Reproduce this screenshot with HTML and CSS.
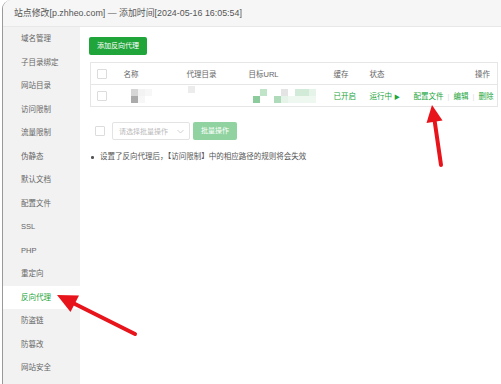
FILE: index.html
```
<!DOCTYPE html>
<html lang="zh-CN">
<head>
    <meta charset="UTF-8">
    <meta name="viewport" content="width=device-width, initial-scale=1.0">
    <title>站点修改 - 反向代理</title>
    <link rel="stylesheet" href="styles.css">
</head>
<body>

    <div class="window">

        <!-- 标题栏 -->
        <div class="titlebar">站点修改[p.zhheo.com] — 添加时间[2024-05-16 16:05:54]</div>

        <div class="main">

            <!-- 左侧菜单 -->
            <ul class="menu">
                <li>域名管理</li>
                <li>子目录绑定</li>
                <li>网站目录</li>
                <li>访问限制</li>
                <li>流量限制</li>
                <li>伪静态</li>
                <li>默认文档</li>
                <li>配置文件</li>
                <li>SSL</li>
                <li>PHP</li>
                <li>重定向</li>
                <li class="active">反向代理</li>
                <li>防盗链</li>
                <li>防篡改</li>
                <li>网站安全</li>
            </ul>

            <!-- 内容区 -->
            <div class="content">
                <button class="btn">添加反向代理</button>

                <table class="grid">
                    <colgroup>
                        <col class="c-check">
                        <col class="c-name">
                        <col class="c-path">
                        <col class="c-url">
                        <col class="c-cache">
                        <col class="c-state">
                        <col class="c-ops">
                    </colgroup>
                    <thead>
                        <tr>
                            <th><span class="checkbox"></span></th>
                            <th>名称</th>
                            <th>代理目录</th>
                            <th>目标URL</th>
                            <th>缓存</th>
                            <th>状态</th>
                            <th class="right">操作</th>
                        </tr>
                    </thead>
                    <tbody>
                        <tr>
                            <td><span class="checkbox"></span></td>
                            <td>
                                <span class="mosaic name-mosaic">
                                    <i class="g1"></i><i class="g5"></i><i class="g6"></i>
                                    <i class="g2"></i><i class="g6"></i><i></i>
                                </span>
                            </td>
                            <td>
                                <span class="mosaic path-mosaic">
                                    <i class="g4"></i>
                                    <i></i>
                                </span>
                            </td>
                            <td>
                                <span class="mosaic url-mosaic">
                                    <i></i><i class="n2"></i><i></i><i></i><i class="g3"></i><i></i><i class="n3"></i><i class="n3"></i><i class="n4"></i><i></i>
                                    <i class="n1"></i><i></i><i></i><i class="n5"></i><i class="n4"></i><i class="n6"></i><i class="n6"></i><i class="n6"></i><i class="n6"></i><i></i>
                                </span>
                            </td>
                            <td class="green">已开启</td>
                            <td class="green">运行中 <span class="play">▶</span></td>
                            <td class="right ops">
                                <a>配置文件</a><span class="sep">|</span><a>编辑</a><span class="sep">|</span><a>删除</a>
                            </td>
                        </tr>
                    </tbody>
                </table>

                <div class="batch">
                    <span class="checkbox"></span>
                    <div class="select">
                        <span>请选择批量操作</span>
                        <svg width="7" height="5" viewBox="0 0 7 5"><path d="M0.5 1 L3.5 4 L6.5 1" fill="none" stroke="#c8c8c8" stroke-width="0.8"/></svg>
                    </div>
                    <button class="btn btn-light">批量操作</button>
                </div>

                <ul class="tips">
                    <li>设置了反向代理后，【访问限制】中的相应路径的规则将会失效</li>
                </ul>
            </div>
        </div>
    </div>

    <!-- 标注箭头 -->
    <svg class="arrows" width="501" height="384" viewBox="0 0 501 384">
        <line x1="441" y1="165" x2="434.5" y2="120" stroke="#e8141b" stroke-width="4" stroke-linecap="round"/>
        <polygon points="432,105 426.5,123 442.5,120.5" fill="#e8141b"/>
        <line x1="135" y1="334" x2="73" y2="303" stroke="#e8141b" stroke-width="4" stroke-linecap="round"/>
        <polygon points="57,295 70.5,312 79,295.5" fill="#e8141b"/>
    </svg>

</body>
</html>
```

FILE: styles.css
```
/* 基础设置 */
body {
    margin: 0;
    font-family: "Liberation Sans", "Noto Sans CJK SC", sans-serif;
    color: #666;
    background: #fff;
    overflow: hidden;
    position: relative;
}

ul {
    list-style: none;
    margin: 0;
    padding: 0;
}

/* 窗口外框 */
.window {
    margin-left: 2px;
    height: 384px;
    border-left: 1px solid #9a9a9a;
    border-top-left-radius: 9px;
    overflow: hidden;
}

/* 标题栏 */
.titlebar {
    height: 26px;
    line-height: 26px;
    padding-left: 11px;
    background: #f6f6f6;
    border-bottom: 1px solid #e8e8e8;
    font-size: 8.9px;
    color: #555;
    white-space: nowrap;
}

.main {
    display: flex;
}

/* 左侧菜单 */
.menu {
    width: 77px;
    flex-shrink: 0;
    background: #f2f2f2;
    height: 360px;
}

.menu li {
    height: 23.5px;
    line-height: 23.5px;
    padding-left: 18px;
    font-size: 7.5px;
    color: #666;
}

.menu li.active {
    background: #fff;
    color: #20a53a;
}

/* 内容区 */
.content {
    flex: 1;
    padding: 10px 3px 0 9px;
}

.btn {
    display: block;
    height: 18px;
    padding: 0 8px;
    border: none;
    border-radius: 2px;
    background: #20a53a;
    color: #fff;
    font-family: inherit;
    font-size: 7px;
    line-height: 18px;
}

.btn-light {
    background: #90d3a0;
    width: 44px;
    padding: 0;
}

/* 表格 */
.grid {
    margin-top: 7px;
    margin-left: 1px;
    width: 408px;
    border-collapse: collapse;
    table-layout: fixed;
    border: 1px solid #e6e6e6;
    font-size: 7.5px;
}

.c-check { width: 33px; }
.c-name { width: 63px; }
.c-path { width: 62px; }
.c-url { width: 85px; }
.c-cache { width: 36px; }
.c-state { width: 44px; }

.grid th,
.grid td {
    padding: 0;
    text-align: left;
    font-weight: normal;
    white-space: nowrap;
}

.grid th {
    height: 21px;
    color: #666;
    border-bottom: 1px solid #e6e6e6;
}

.grid td {
    height: 21px;
}

.grid .right {
    text-align: right;
    padding-right: 7px;
}

.checkbox {
    display: inline-block;
    width: 8px;
    height: 8px;
    border: 1px solid #dcdcdc;
    border-radius: 1px;
    background: #fff;
    vertical-align: middle;
    margin-left: 6px;
}

.green {
    color: #20a53a;
}

.play {
    font-size: 6px;
}

.ops a {
    color: #20a53a;
}

.sep {
    color: #ddd;
    margin: 0 4px;
}

/* 打码区域 */
.mosaic {
    display: inline-grid;
    grid-auto-rows: 7px;
    vertical-align: middle;
}

.mosaic i {
    display: block;
    width: 7px;
    height: 7px;
}

.name-mosaic {
    grid-template-columns: repeat(3, 7px);
    margin-left: 7px;
}

.path-mosaic {
    grid-template-columns: 7px;
    margin-left: 1px;
    margin-top: -6px;
}

.url-mosaic {
    grid-template-columns: repeat(10, 7px);
    margin-left: 4px;
}

.g1 { background: #d6d6d6; }
.g2 { background: #ababab; }
.g3 { background: #e4e4e4; }
.g4 { background: #ececec; }
.g5 { background: #f3f3f3; }
.g6 { background: #f7f7f7; }
.n1 { background: #8ccc9c; }
.n2 { background: #c0e4c8; }
.n3 { background: #d2ebd8; }
.n4 { background: #e6f3e9; }
.n5 { background: #b0dbbb; }
.n6 { background: #eff7f1; }

/* 批量操作 */
.batch {
    display: flex;
    align-items: center;
    gap: 3px;
    margin-top: 15px;
}

.batch .checkbox {
    margin-right: 4px;
}

.select {
    width: 78px;
    height: 18px;
    box-sizing: border-box;
    border: 1px solid #e3e3e3;
    border-radius: 2px;
    display: flex;
    align-items: center;
    justify-content: space-between;
    padding: 0 5px 0 6px;
    font-size: 7px;
    color: #bbb;
}

/* 提示 */
.tips {
    margin-top: 11px;
    font-size: 7.5px;
    color: #555;
}

.tips li {
    line-height: 12px;
    padding-left: 11px;
    position: relative;
}

.tips li:before {
    content: "";
    position: absolute;
    left: 2px;
    top: 5px;
    width: 2.5px;
    height: 2.5px;
    border-radius: 50%;
    background: #555;
}

/* 标注箭头 */
.arrows {
    position: absolute;
    left: 0;
    top: 0;
    pointer-events: none;
}
```
